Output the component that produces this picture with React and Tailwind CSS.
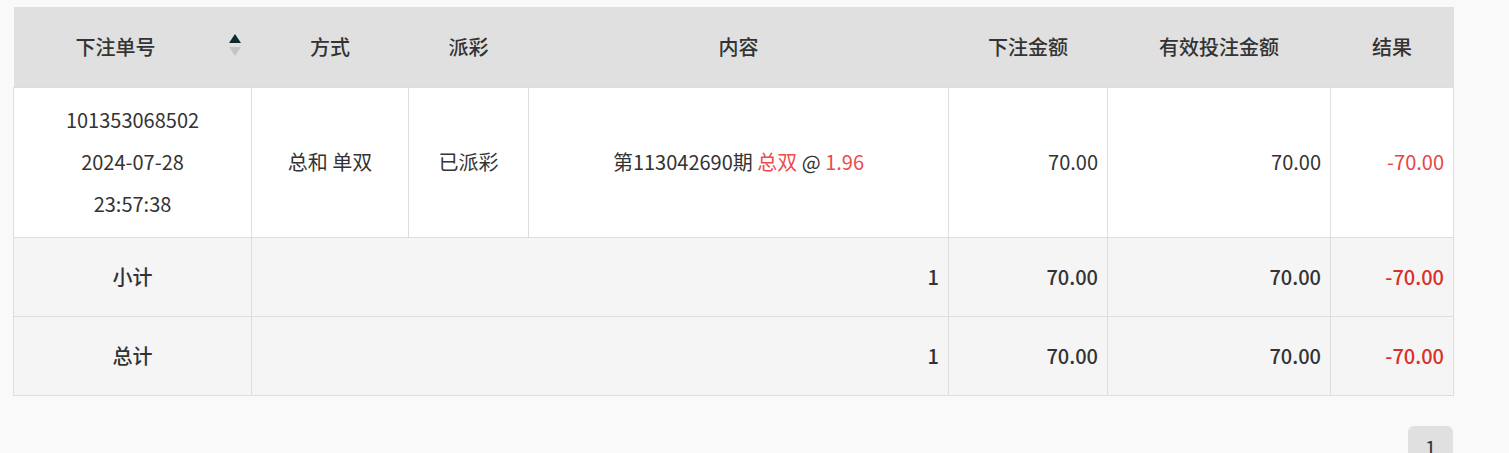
import React from "react";

const font = { fontFamily: '"Noto Sans CJK SC", "Noto Sans", sans-serif' };

function SortIcon() {
  return (
    <span className="flex flex-col items-center ml-[11px] mr-[11px] gap-[4px] -mt-[4px]">
      <svg width="12" height="9" viewBox="0 0 12 9"><polygon points="6,0 12,9 0,9" fill="#0f2a2a" /></svg>
      <svg width="12" height="9" viewBox="0 0 12 9"><polygon points="0,0 12,0 6,9" fill="#c4c4c4" /></svg>
    </span>
  );
}

export default function App() {
  const th = "h-[80px] text-[20px] font-medium text-[#333] text-center align-middle p-0";
  const td = "border border-[#dddddd] text-[20px] text-[#333] align-middle";
  const tdSum = "border border-[#dddddd] text-[20px] font-medium text-[#333] align-middle";
  return (
    <div className="min-h-[453px] bg-[#f9f9f9] pl-[13px] pt-[7px] w-[1509px]" style={font}>
      <table className="border-collapse w-[1440px] table-fixed">
        <colgroup>
          <col className="w-[238px]" />
          <col className="w-[157px]" />
          <col className="w-[120px]" />
          <col className="w-[420px]" />
          <col className="w-[159px]" />
          <col className="w-[223px]" />
          <col className="w-[123px]" />
        </colgroup>
        <thead>
          <tr className="bg-[#e0e0e0]">
            <th className={th}>
              <div className="flex items-center">
                <span className="flex-1 text-center">下注单号</span>
                <SortIcon />
              </div>
            </th>
            <th className={th}>方式</th>
            <th className={th}>派彩</th>
            <th className={th}>内容</th>
            <th className={th}>下注金额</th>
            <th className={th}>有效投注金额</th>
            <th className={th}>结果</th>
          </tr>
        </thead>
        <tbody>
          <tr className="bg-white h-[150px]">
            <td className={td + " text-center leading-[42px] py-[11px]"}>
              <div>101353068502</div>
              <div>2024-07-28</div>
              <div>23:57:38</div>
            </td>
            <td className={td + " text-center"}>总和 单双</td>
            <td className={td + " text-center"}>已派彩</td>
            <td className={td + " text-center"}>
              第113042690期 <span className="text-[#ee4b4b]">总双</span> @ <span className="text-[#ee4b4b]">1.96</span>
            </td>
            <td className={td + " text-right pr-[9px]"}>70.00</td>
            <td className={td + " text-right pr-[9px]"}>70.00</td>
            <td className={td + " text-right pr-[9px] text-[#e84545]"}>-70.00</td>
          </tr>
          <tr className="bg-[#f5f5f5] h-[79px]">
            <td className={tdSum + " text-center"}>小计</td>
            <td colSpan={3} className={tdSum + " text-right pr-[9px]"}>1</td>
            <td className={tdSum + " text-right pr-[9px]"}>70.00</td>
            <td className={tdSum + " text-right pr-[9px]"}>70.00</td>
            <td className={tdSum + " text-right pr-[9px] text-[#d8302a]"}>-70.00</td>
          </tr>
          <tr className="bg-[#f5f5f5] h-[79px]">
            <td className={tdSum + " text-center"}>总计</td>
            <td colSpan={3} className={tdSum + " text-right pr-[9px]"}>1</td>
            <td className={tdSum + " text-right pr-[9px]"}>70.00</td>
            <td className={tdSum + " text-right pr-[9px]"}>70.00</td>
            <td className={tdSum + " text-right pr-[9px] text-[#d8302a]"}>-70.00</td>
          </tr>
        </tbody>
      </table>
      <div className="w-[1440px] flex justify-end pt-[30px]">
        <div className="w-[45px] h-[45px] rounded-[6px] bg-[#e0e0e0] flex items-center justify-center text-[20px] text-[#333]">1</div>
      </div>
    </div>
  );
}
